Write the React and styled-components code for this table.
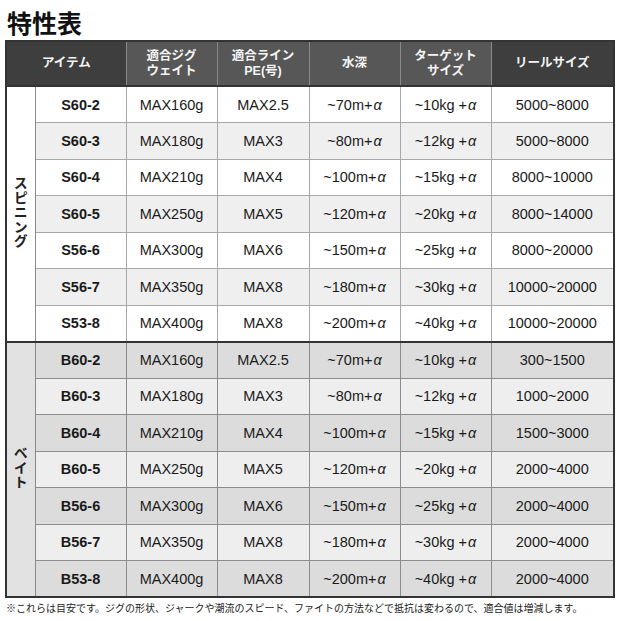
import React from "react";
import styled, { createGlobalStyle } from "styled-components";

const GlobalStyle = createGlobalStyle`
  body {
    margin: 0;
    background: #ffffff;
    font-family: "Liberation Sans", "Noto Sans CJK JP", sans-serif;
  }
`;

const Page = styled.div`
  width: 621px;
  height: 621px;
  padding: 0 0 0 5px;
  box-sizing: border-box;
  overflow: hidden;
`;

const Title = styled.h1`
  margin: 0;
  height: 40px;
  padding: 10px 0 0 2px;
  box-sizing: border-box;
  font-family: "Noto Sans CJK JP", sans-serif;
  font-size: 25px;
  line-height: 25px;
  font-weight: 700;
  color: #111;
`;

const Table = styled.table`
  width: 608px;
  table-layout: fixed;
  border-collapse: collapse;
  border: 2px solid #333;
`;

const HeadRow = styled.tr`
  height: 45px;
`;

const HeadCell = styled.th`
  background: ${(p) => (p.$dark ? "#3e3e3e" : "#575757")};
  color: #f4f4f4;
  font-family: "Liberation Sans", "Noto Sans CJK JP", sans-serif;
  font-size: 12.5px;
  line-height: 15px;
  font-weight: 700;
  text-align: center;
  vertical-align: middle;
  padding: 0;
  border-left: 1px solid #8a8a8a;
  border-bottom: 2px solid #333;
  &:first-child {
    border-left: none;
  }
`;

const HeadLine = styled.span`
  display: block;
  height: 15px;
  line-height: 15px;
`;

const Row = styled.tr`
  height: 36.5px;
  background: ${(p) => p.$bg};
  border-bottom: 1px solid ${(p) => p.$line};
  &:last-child {
    border-bottom: 2px solid #333;
  }
`;

const GroupCell = styled.td`
  background: ${(p) => p.$bg};
  border-right: 1px solid #8a8a8a;
  padding: 0;
  text-align: center;
  vertical-align: middle;
`;

const GroupLabel = styled.span`
  display: inline-block;
  writing-mode: vertical-rl;
  font-family: "Noto Sans CJK JP", sans-serif;
  font-size: 14px;
  font-weight: 700;
  color: #222;
  letter-spacing: 0.5px;
`;

const Cell = styled.td`
  padding: 0;
  text-align: center;
  vertical-align: middle;
  font-family: "Liberation Sans", "Noto Sans CJK JP", sans-serif;
  font-size: 14.5px;
  font-weight: ${(p) => (p.$bold ? 700 : 400)};
  color: #1a1a1a;
  border-right: 1px solid ${(p) => p.$line};
  &:last-child {
    border-right: none;
  }
`;

const Alpha = styled.i`
  font-style: italic;
  margin-left: 1px;
`;

const Note = styled.p`
  margin: 4px 0 0 1px;
  font-family: "Noto Sans CJK JP", sans-serif;
  font-size: 10px;
  line-height: 12px;
  color: #222;
  white-space: nowrap;
`;

const widths = [29, 91, 91, 92, 91, 91, 123];

const groups = [
  {
    label: "スピニング",
    groupBg: "#ffffff",
    bgs: ["#ffffff", "#efefef"],
    line: "#a8a8a8",
    rows: [
      ["S60-2", "MAX160g", "MAX2.5", "~70m+", "~10kg +", "5000~8000"],
      ["S60-3", "MAX180g", "MAX3", "~80m+", "~12kg +", "5000~8000"],
      ["S60-4", "MAX210g", "MAX4", "~100m+", "~15kg +", "8000~10000"],
      ["S60-5", "MAX250g", "MAX5", "~120m+", "~20kg +", "8000~14000"],
      ["S56-6", "MAX300g", "MAX6", "~150m+", "~25kg +", "8000~20000"],
      ["S56-7", "MAX350g", "MAX8", "~180m+", "~30kg +", "10000~20000"],
      ["S53-8", "MAX400g", "MAX8", "~200m+", "~40kg +", "10000~20000"],
    ],
  },
  {
    label: "ベイト",
    groupBg: "#e2e2e2",
    bgs: ["#dcdcdc", "#eeeeee"],
    line: "#8c8c8c",
    rows: [
      ["B60-2", "MAX160g", "MAX2.5", "~70m+", "~10kg +", "300~1500"],
      ["B60-3", "MAX180g", "MAX3", "~80m+", "~12kg +", "1000~2000"],
      ["B60-4", "MAX210g", "MAX4", "~100m+", "~15kg +", "1500~3000"],
      ["B60-5", "MAX250g", "MAX5", "~120m+", "~20kg +", "2000~4000"],
      ["B56-6", "MAX300g", "MAX6", "~150m+", "~25kg +", "2000~4000"],
      ["B56-7", "MAX350g", "MAX8", "~180m+", "~30kg +", "2000~4000"],
      ["B53-8", "MAX400g", "MAX8", "~200m+", "~40kg +", "2000~4000"],
    ],
  },
];

const GroupBody = ({ group }) => (
  <tbody>
    {group.rows.map((r, i) => (
      <Row key={r[0]} $bg={group.bgs[i % 2]} $line={group.line}>
        {i === 0 && (
          <GroupCell rowSpan={group.rows.length} $bg={group.groupBg}>
            <GroupLabel>{group.label}</GroupLabel>
          </GroupCell>
        )}
        <Cell $bold $line={group.line}>{r[0]}</Cell>
        <Cell $line={group.line}>{r[1]}</Cell>
        <Cell $line={group.line}>{r[2]}</Cell>
        <Cell $line={group.line}>
          {r[3]}
          <Alpha>α</Alpha>
        </Cell>
        <Cell $line={group.line}>
          {r[4]}
          <Alpha>α</Alpha>
        </Cell>
        <Cell $line={group.line}>{r[5]}</Cell>
      </Row>
    ))}
  </tbody>
);

export default function App() {
  return (
    <Page>
      <GlobalStyle />
      <Title>特性表</Title>
      <Table>
        <colgroup>
          {widths.map((w, i) => (
            <col key={i} style={{ width: w }} />
          ))}
        </colgroup>
        <thead>
          <HeadRow>
            <HeadCell colSpan={2} $dark>
              アイテム
            </HeadCell>
            <HeadCell>
              <HeadLine>適合ジグ</HeadLine>
              <HeadLine>ウェイト</HeadLine>
            </HeadCell>
            <HeadCell>
              <HeadLine>適合ライン</HeadLine>
              <HeadLine>PE(号)</HeadLine>
            </HeadCell>
            <HeadCell>水深</HeadCell>
            <HeadCell>
              <HeadLine>ターゲット</HeadLine>
              <HeadLine>サイズ</HeadLine>
            </HeadCell>
            <HeadCell $dark>リールサイズ</HeadCell>
          </HeadRow>
        </thead>
        {groups.map((g) => (
          <GroupBody key={g.label} group={g} />
        ))}
      </Table>
      <Note>
        ※これらは目安です。ジグの形状、ジャークや潮流のスピード、ファイトの方法などで抵抗は変わるので、適合値は増減します。
      </Note>
    </Page>
  );
}
